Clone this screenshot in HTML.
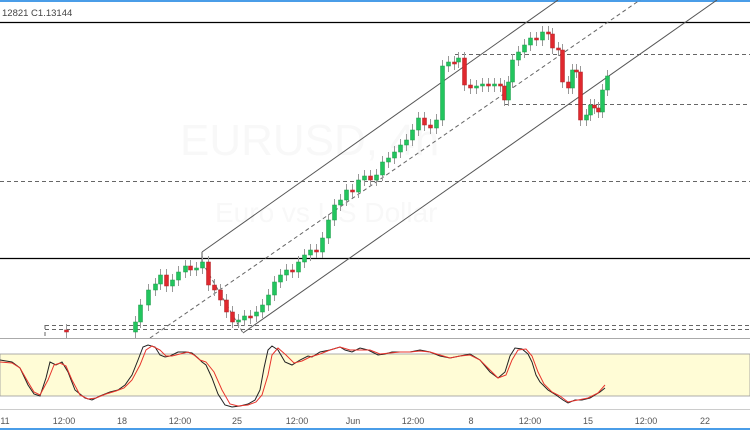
<!DOCTYPE html>
<html><head><meta charset="utf-8"><style>
html,body{margin:0;padding:0;background:#fff;width:750px;height:430px;overflow:hidden;font-family:"Liberation Sans",sans-serif}
svg{position:absolute;left:0;top:0}
.t{font-size:9px;fill:#555}
</style></head><body>
<svg width="750" height="430" viewBox="0 0 750 430" id="s">
<rect x="0" y="0" width="750" height="2" fill="#4a9de8"/>
<text x="2" y="16" class="t" style="font-size:9.5px;fill:#444">12821  C1.13144</text>
<text x="180" y="155" font-size="44" fill="#f8f8f8">EURUSD, 4h</text>
<text x="215" y="222" font-size="28" fill="#f8f8f8">Euro vs US Dollar</text>
<line x1="0" y1="22.5" x2="750" y2="22.5" stroke="#000" stroke-width="1.3"/>
<line x1="0" y1="258.5" x2="750" y2="258.5" stroke="#000" stroke-width="1.3"/>
<g stroke="#666" stroke-dasharray="4,3" stroke-width="1">
<line x1="455" y1="54.5" x2="750" y2="54.5"/>
<line x1="505" y1="104.5" x2="750" y2="104.5"/>
<line x1="0" y1="181.5" x2="750" y2="181.5"/>
<line x1="45" y1="325.5" x2="750" y2="325.5"/>
<line x1="45" y1="329.5" x2="750" y2="329.5"/>
<line x1="45" y1="325" x2="45" y2="338"/>
<line x1="150" y1="338" x2="640" y2="0"/>
<line x1="202" y1="262" x2="243" y2="333"/>
</g>
<g stroke="#555" stroke-width="1">
<line x1="202" y1="252" x2="558" y2="0"/>
<line x1="243" y1="333" x2="717" y2="0"/>
<line x1="202" y1="252" x2="202" y2="262"/>
</g>
<g id="c"></g>
<rect x="0" y="338" width="750" height="71" fill="#fff"/>
<line x1="0" y1="338.5" x2="750" y2="338.5" stroke="#aaa"/>
<rect x="0" y="354" width="750" height="42" fill="#fffcd6" stroke="#999" stroke-width="0.8"/>
<polyline fill="none" stroke="#222" stroke-width="1" points="0,360 12,362 20,368 28,385 34,394 40,396 46,378 50,362 56,365 62,362 68,372 75,390 85,398 92,400 100,396 110,392 118,390 125,385 132,375 138,360 143,347 148,345 155,347 160,355 165,357 170,356 178,352 186,352 192,353 198,358 202,362 206,365 212,378 218,394 225,405 232,407 240,406 248,404 255,400 260,390 264,368 268,350 272,346 278,350 285,362 292,365 300,360 308,356 312,357 320,352 330,350 340,347 345,350 352,352 360,348 368,350 378,355 385,354 392,352 400,352 410,352 420,350 430,352 440,356 450,358 460,356 470,354 480,360 490,372 498,378 505,372 510,356 515,348 522,349 528,354 532,362 536,375 540,382 548,390 556,395 563,400 568,403 575,400 582,400 590,398 600,392 605,388"/>
<polyline fill="none" stroke="#e8342c" stroke-width="1" points="0,362 12,363 20,368 28,382 34,392 40,395 48,380 54,365 60,363 66,366 72,380 80,395 88,399 96,398 106,394 116,391 124,388 132,380 140,365 146,350 152,346 160,350 166,356 172,356 180,354 188,352 194,355 200,360 206,362 214,372 222,390 230,404 238,406 248,405 256,402 262,395 268,375 272,355 278,348 286,355 294,363 302,361 310,357 320,354 330,350 340,347 350,350 360,350 370,350 380,354 390,353 400,352 410,352 420,351 430,352 440,355 450,358 460,356 470,355 480,360 490,370 498,378 506,375 512,360 518,350 526,349 532,356 538,372 544,384 552,392 560,396 568,402 578,400 588,398 598,393 605,385"/>
<rect x="0" y="409" width="750" height="21" fill="#fff"/>
<line x1="0" y1="409.5" x2="750" y2="409.5" stroke="#ccc"/>
<g class="t" text-anchor="middle">
<text x="5" y="424">11</text><text x="64" y="424">12:00</text><text x="122" y="424">18</text>
<text x="180" y="424">12:00</text><text x="237" y="424">25</text><text x="297" y="424">12:00</text>
<text x="353" y="424">Jun</text><text x="413" y="424">12:00</text><text x="471" y="424">8</text>
<text x="530" y="424">12:00</text><text x="588" y="424">15</text><text x="646" y="424">12:00</text>
<text x="705" y="424">22</text>
</g>
<rect x="0" y="428" width="750" height="2" fill="#4a9de8"/>
</svg>
<script>
var pts=[[60,330],[66,332],[135,322],[140,305],[148,290],[155,284],[160,275],[166,286],[172,280],[178,272],[185,266],[190,270],[196,268],[202,262],[208,285],[214,290],[220,300],[226,312],[232,322],[238,320],[244,316],[250,316],[256,312],[262,305],[268,295],[274,282],[280,275],[286,270],[292,272],[298,262],[304,255],[310,250],[316,252],[322,238],[328,220],[334,205],[340,200],[346,190],[352,192],[358,180],[364,176],[370,180],[376,175],[382,162],[388,158],[394,152],[400,145],[406,140],[412,130],[418,118],[424,125],[430,128],[436,120],[442,66],[448,62],[454,62],[458,58],[464,85],[470,88],[476,86],[482,84],[488,86],[494,84],[500,86],[504,100],[508,82],[512,60],[518,52],[524,45],[530,38],[536,40],[542,32],[548,34],[552,48],[558,50],[562,82],[568,88],[572,70],[576,72],[580,120],[586,115],[590,105],[594,108],[598,112],[602,90],[607,76]];
var g='';for(var i=1;i<pts.length;i++){var o=pts[i-1][1],c=pts[i][1],x=pts[i][0];var t=Math.min(o,c),b=Math.max(o,c);if(b-t<2)b=t+2;var up=c<o;
g+='<line x1="'+(x+0.5)+'" y1="'+(t-6)+'" x2="'+(x+0.5)+'" y2="'+(b+6)+'" stroke="#999"/>';
g+='<rect x="'+(x-1.5)+'" y="'+t+'" width="4" height="'+(b-t)+'" fill="'+(up?'#22c55e':'#e0282e')+'" stroke="'+(up?'#1a9a48':'#b02024')+'" stroke-width="0.5"/>';}
document.getElementById('c').innerHTML=g;
</script>
</body></html>
